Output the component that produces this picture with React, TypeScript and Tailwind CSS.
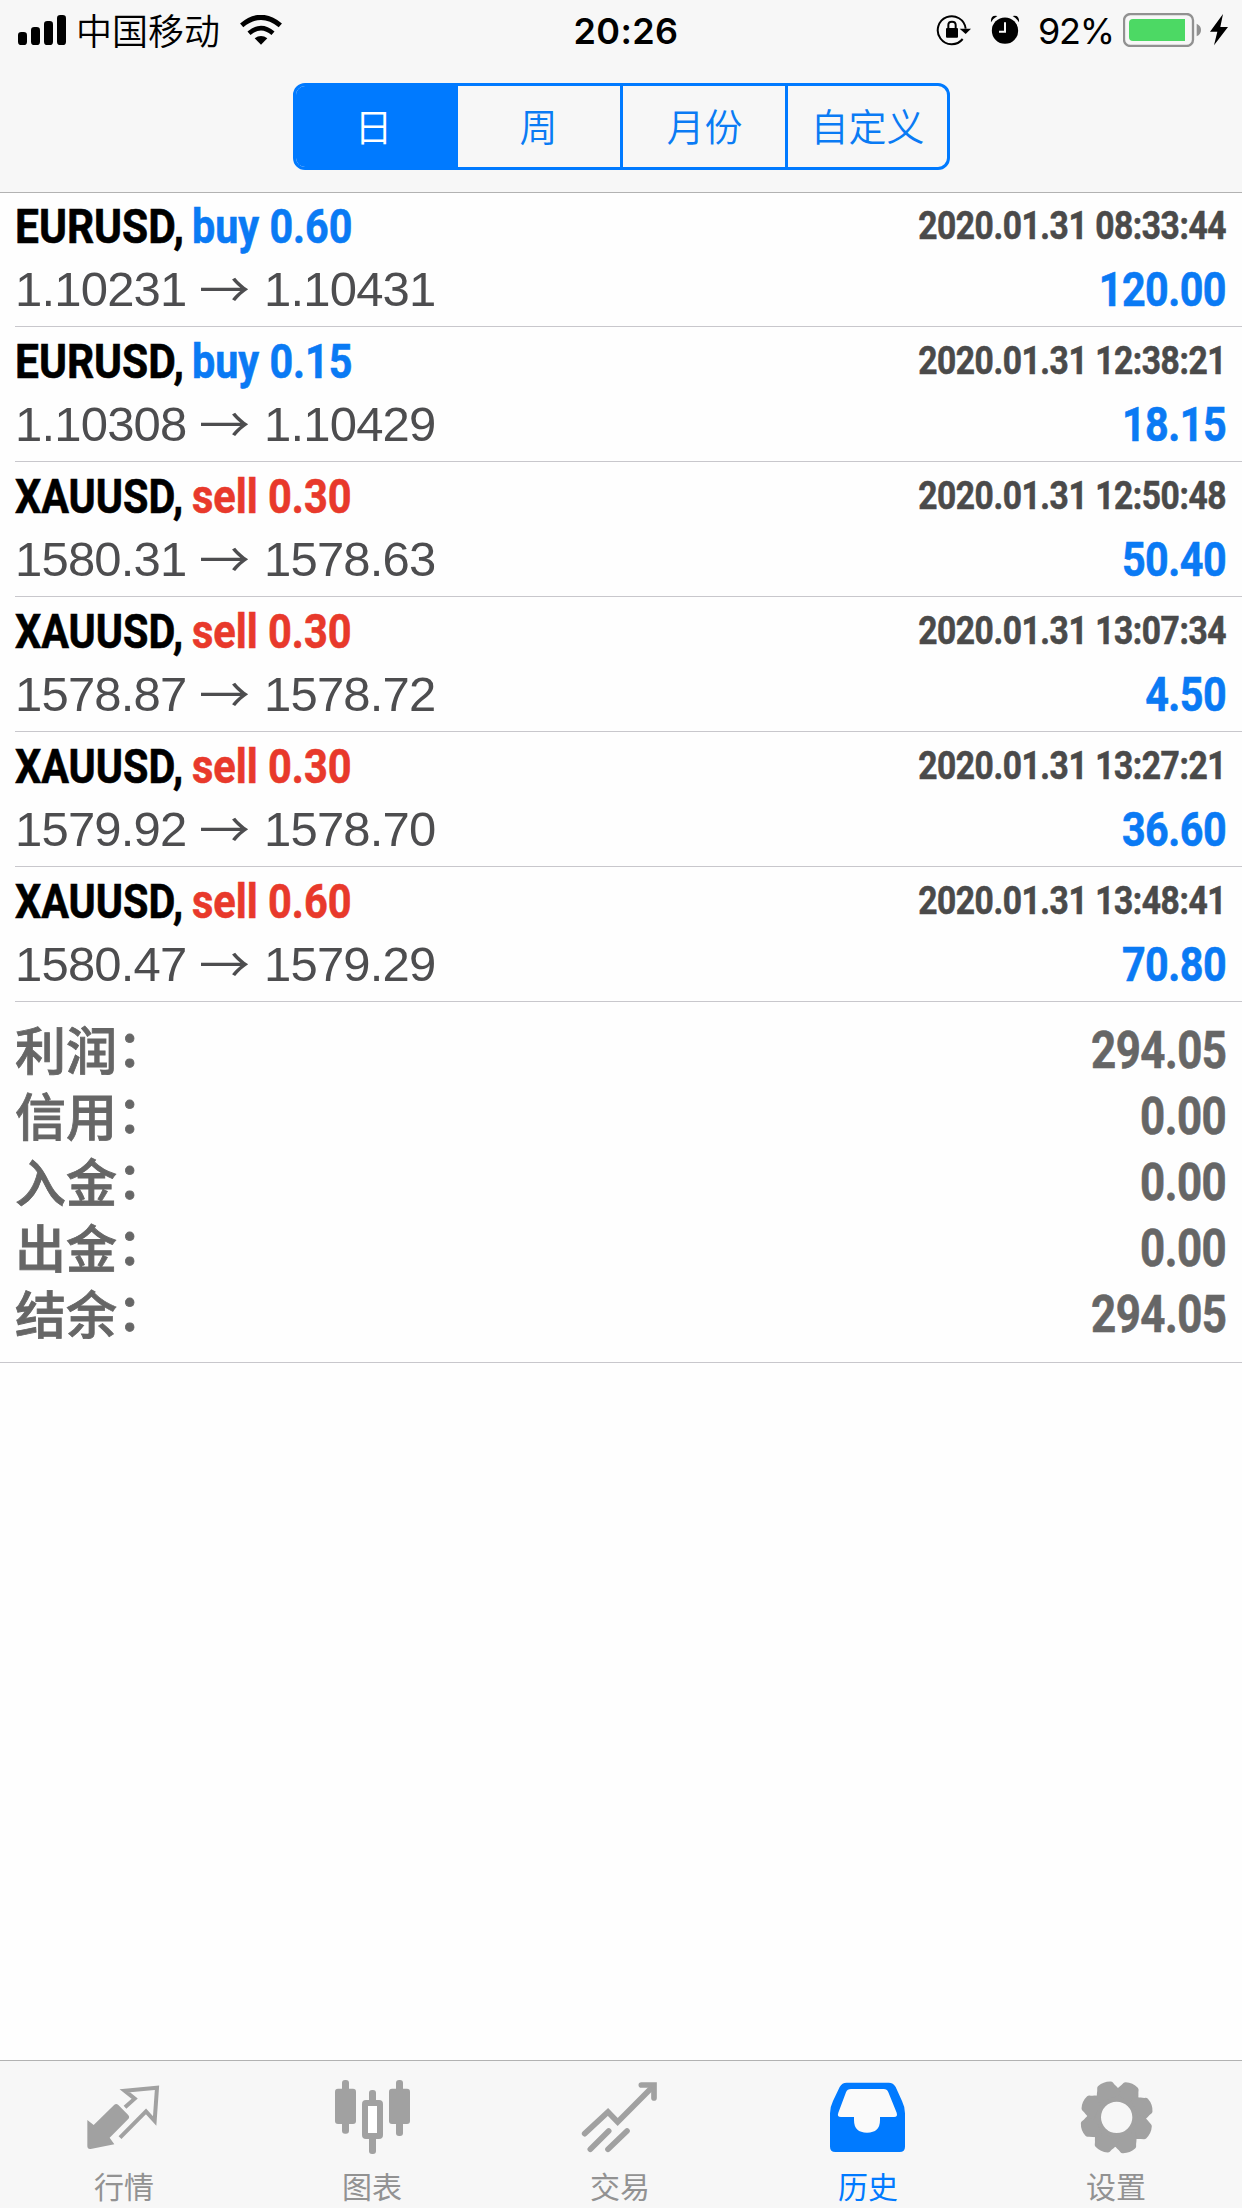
import type { ReactNode } from 'react';

type Trade = {
  symbol: string;
  side: 'buy' | 'sell';
  volume: string;
  time: string;
  open: string;
  close: string;
  profit: string;
};

const trades: Trade[] = [
  { symbol: 'EURUSD', side: 'buy', volume: '0.60', time: '2020.01.31 08:33:44', open: '1.10231', close: '1.10431', profit: '120.00' },
  { symbol: 'EURUSD', side: 'buy', volume: '0.15', time: '2020.01.31 12:38:21', open: '1.10308', close: '1.10429', profit: '18.15' },
  { symbol: 'XAUUSD', side: 'sell', volume: '0.30', time: '2020.01.31 12:50:48', open: '1580.31', close: '1578.63', profit: '50.40' },
  { symbol: 'XAUUSD', side: 'sell', volume: '0.30', time: '2020.01.31 13:07:34', open: '1578.87', close: '1578.72', profit: '4.50' },
  { symbol: 'XAUUSD', side: 'sell', volume: '0.30', time: '2020.01.31 13:27:21', open: '1579.92', close: '1578.70', profit: '36.60' },
  { symbol: 'XAUUSD', side: 'sell', volume: '0.60', time: '2020.01.31 13:48:41', open: '1580.47', close: '1579.29', profit: '70.80' },
];

const totals = [
  ['利润', '294.05'],
  ['信用', '0.00'],
  ['入金', '0.00'],
  ['出金', '0.00'],
  ['结余', '294.05'],
];

function StatusBar() {
  return (
    <div className="grid h-[60px] grid-cols-3 items-center text-black">
      <div className="flex items-center pl-[18px]">
        <svg className="h-[30px] w-[48px]" viewBox="54 45 144 90">
          <rect x="54" y="96" width="27" height="39" rx="10" />
          <rect x="93" y="81" width="27" height="54" rx="10" />
          <rect x="132" y="63" width="27" height="72" rx="10" />
          <rect x="171" y="45" width="27" height="90" rx="10" />
        </svg>
        <span className="ml-[10px] pb-[2px] font-['Noto_Sans_CJK_SC',sans-serif] text-[36px] font-[350] leading-[56px]">中国移动</span>
        <svg className="ml-[20px] h-[30px] w-[42px]" viewBox="720 44 126 90" fill="none" stroke="black">
          <path d="M725 75Q783 27 841 75" strokeWidth="15" />
          <path d="M747 99Q783 68 819 99" strokeWidth="14" />
          <path d="M764 114Q783 100 802 114L783 133Z" fill="black" stroke="none" />
        </svg>
      </div>
      <span className="pl-[10px] pt-[2px] text-center font-['Inter',sans-serif] text-[36px] font-semibold leading-[58px] tracking-[0.4px]">20:26</span>
      <div className="flex items-center justify-end pr-[14px]">
        <svg className="h-[32px] w-[36px]" viewBox="291 43 108 96" fill="none" stroke="black" strokeWidth="6">
          <path d="M371 118A42 42 0 1 1 380 87" />
          <path d="M362 87H396L380 103Z" fill="black" stroke="none" />
          <rect x="321" y="85" width="36" height="29" rx="3" fill="black" stroke="none" />
          <path d="M328 86V76Q328 66 339 66T350 76V86" />
        </svg>
        <svg className="ml-[18px] h-[30px] w-[30px]" viewBox="453 45 90 90">
          <circle cx="498" cy="92" r="39.500" />
          <path d="M456 67Q454 44 475 48Q464 54 456 67M540 67Q542 44 521 48Q532 54 540 67" />
          <path d="M498 67V95H480" fill="none" stroke="#f7f7f7" strokeWidth="6" />
        </svg>
        <span className="ml-[18px] pt-[2px] font-['Inter',sans-serif] text-[36px] leading-[58px] tracking-[-1.2px]">92%</span>
        <svg className="ml-[9px] h-[34px] w-[78px]" viewBox="846 39 234 102">
          <rect x="849" y="42" width="207" height="96" rx="19" fill="none" stroke="#919191" strokeWidth="7" />
          <path d="M876 57H1032V123H876Q864 123 864 111V69Q864 57 876 57Z" fill="#4cd964" />
          <path d="M1067 71Q1080 77 1080 90T1067 109Z" fill="#919191" />
        </svg>
        <svg className="ml-[9px] h-[32px] w-[18px]" viewBox="1107 43 54 96">
          <path d="M1146 43L1107 96H1129L1119 137L1161 82H1138Z" />
        </svg>
      </div>
    </div>
  );
}

function Segments() {
  return (
    <div className="mx-auto mt-[23px] flex h-[87px] w-[657px] overflow-hidden rounded-[12px] border-[3px] border-[#007aff] font-['Noto_Sans_CJK_SC',sans-serif] text-[38px] font-[350] text-[#0a7bf4]">
      <div className="flex w-[159px] items-center justify-center bg-[#007aff] pb-[5px] pr-[3px] text-white">日</div>
      <div className="flex w-[165px] items-center justify-center border-l-[3px] border-[#007aff] pb-[5px]">周</div>
      <div className="flex w-[165px] items-center justify-center border-l-[3px] border-[#007aff] pb-[5px] pl-[2px]">月份</div>
      <div className="flex flex-1 items-center justify-center border-l-[3px] border-[#007aff] pb-[5px] pl-px">自定义</div>
    </div>
  );
}

function TradeRow({ trade }: { trade: Trade }) {
  return (
    <div className="ml-[15px] h-[135px] border-b border-[#c8c7cc] pr-[16px]">
      <div className="flex h-[69px] justify-between whitespace-nowrap pt-px font-['Roboto',sans-serif] font-bold leading-[68px] [-webkit-text-stroke:0.6px]">
        <div className="flex text-[48px]">
          {trade.symbol === 'EURUSD' ? (
            <span className="w-[177px] origin-left scale-x-[0.885] text-black">{trade.symbol},</span>
          ) : (
            <span className="w-[177px] origin-left scale-x-[0.86] text-black">{trade.symbol},</span>
          )}
          {trade.side === 'buy' ? (
            <span className="origin-left scale-x-[0.86] text-[#0a7af4]">buy {trade.volume}</span>
          ) : (
            <span className="origin-left scale-x-[0.865] text-[#e8392b]">sell {trade.volume}</span>
          )}
        </div>
        <span className="origin-right scale-x-[0.86] text-[39px] leading-[67px] tracking-[-0.5px] text-[#4a4a4a]">{trade.time}</span>
      </div>
      <div className="flex h-[58px] justify-between whitespace-nowrap leading-[56px]">
        <div className="flex font-['Liberation_Sans',Arial,sans-serif] text-[49px] tracking-[-0.8px] text-[#4d4d4f]">
          <span className="w-[184px]">{trade.open}</span>
          <span className="-mt-[2px] w-[65px] origin-left scale-x-[1.04] font-['Noto_Sans_CJK_SC',sans-serif] font-normal">→</span>
          <span>{trade.close}</span>
        </div>
        <span className="origin-right scale-x-[0.86] font-['Roboto',sans-serif] text-[48px] font-bold leading-[58px] tracking-[-0.6px] text-[#0a7af4] [-webkit-text-stroke:0.6px]">
          {trade.profit}
        </span>
      </div>
    </div>
  );
}

function Tab({ label, viewBox, active, children }: { label: string; viewBox: string; active?: boolean; children: ReactNode }) {
  return (
    <div className={active ? 'flex w-[248px] flex-col items-center text-[#007aff]' : 'flex w-[248px] flex-col items-center text-[#929292]'}>
      <svg className={active ? 'mt-[11px] size-[84px] text-[#007aff]' : 'mt-[11px] size-[84px] text-[#a1a1a1]'} viewBox={viewBox} fill="currentColor">
        {children}
      </svg>
      <span className="mt-[7px] font-['Noto_Sans_CJK_SC',sans-serif] text-[30px] leading-[44px]">{label}</span>
    </div>
  );
}

function Gear() {
  const tooth = 'M-36 -76L-31 -88Q-27 -95 -25 -102Q-24 -105 -20 -107Q0 -115 20 -107Q24 -105 25 -102Q27 -95 31 -88L36 -76V-60H-36Z';
  return (
    <g transform="translate(350 202)">
      <path
        fillRule="evenodd"
        d="M0 -88A88 88 0 1 0 0 88A88 88 0 1 0 0 -88ZM0 -47A47 47 0 1 1 0 47A47 47 0 1 1 0 -47Z"
      />
      {[25, 70, 115, 160, 205, 250, 295, 340].map((a) => (
        <path key={a} d={tooth} transform={`rotate(${a})`} />
      ))}
    </g>
  );
}

export default function App() {
  return (
    <div className="flex h-[2208px] w-[1242px] flex-col overflow-hidden bg-[#fefefe]">
      <header className="relative h-[192px] shrink-0 bg-[#f7f7f7] shadow-[0_1px_0_#b2b2b2]">
        <StatusBar />
        <Segments />
      </header>

      <main className="flex-1">
        {trades.map((trade) => (
          <TradeRow key={trade.time} trade={trade} />
        ))}
        <div className="h-[361px] border-b border-[#c8c7cc] pl-[15px] pr-[16px] pt-[16px] font-bold text-[#666]">
          {totals.map(([label, value]) => (
            <div key={label} className="flex h-[66px] items-center justify-between whitespace-nowrap">
              <div className="-mt-[7px] flex text-[51px] font-medium leading-[66px] [-webkit-text-stroke:0.8px]">
                <span className="font-['Noto_Sans_CJK_SC',sans-serif]">{label}</span>
                <span className="font-['Noto_Sans_CJK_TC',sans-serif] [font-feature-settings:'halt']">：</span>
              </div>
              <span className="origin-right scale-x-[0.86] font-['Roboto',sans-serif] text-[51px] leading-[66px] tracking-[-0.6px] [-webkit-text-stroke:0.6px]">
                {value}
              </span>
            </div>
          ))}
        </div>
      </main>

      <nav className="flex h-[148px] shrink-0 border-t border-[#b2b2b2] bg-[#f7f7f7]">
        <Tab label="行情" viewBox="246 66 252 252">
          <path d="M262 210L281 225L343 164Q349 159 355 165L384 194Q391 201 384 208L329 263L343 283L272 297Q262 298 262 288Z" />
          <path d="M375 172L404 146L374 122L471 113L464 213L438 184L360 263" fill="none" stroke="currentColor" strokeWidth="12" />
        </Tab>
        <Tab label="图表" viewBox="990 66 252 252">
          <rect x="1005" y="116" width="63" height="106" rx="9" />
          <rect x="1026" y="90" width="21" height="161" rx="9" />
          <rect x="1167" y="116" width="63" height="106" rx="9" />
          <rect x="1188" y="90" width="21" height="168" rx="9" />
          <rect x="1107" y="120" width="21" height="40" rx="9" />
          <rect x="1107" y="256" width="21" height="56" rx="9" />
          <rect x="1095" y="159" width="45" height="99" rx="3" fill="white" stroke="currentColor" strokeWidth="18" />
        </Tab>
        <Tab label="交易" viewBox="114 66 252 252">
          <g fill="none" stroke="currentColor" strokeWidth="17" strokeLinecap="round" strokeLinejoin="miter">
            <path d="M134 251L204 186L233 216L338 110" />
            <path d="M304 105H342V144" />
            <path d="M151 298L206 243M204 298L261 243" />
          </g>
        </Tab>
        <Tab label="历史" viewBox="858 66 252 252" active>
          <path d="M920 98H1046Q1060 98 1067 111L1086 153Q1095 171 1095 190V290Q1095 306 1079 306H886Q870 306 870 290V190Q870 171 879 153L899 111Q906 98 920 98Z" />
          <path
            fill="#fafafa"
            d="M933 117H1031Q1041 117 1045 127L1070 188Q1074 201 1062 201H1020V210Q1020 248 981 248T942 210V201H903Q890 201 895 188L918 127Q922 117 933 117Z"
          />
        </Tab>
        <Tab label="设置" viewBox="222 66 252 252">
          <Gear />
        </Tab>
      </nav>
    </div>
  );
}
